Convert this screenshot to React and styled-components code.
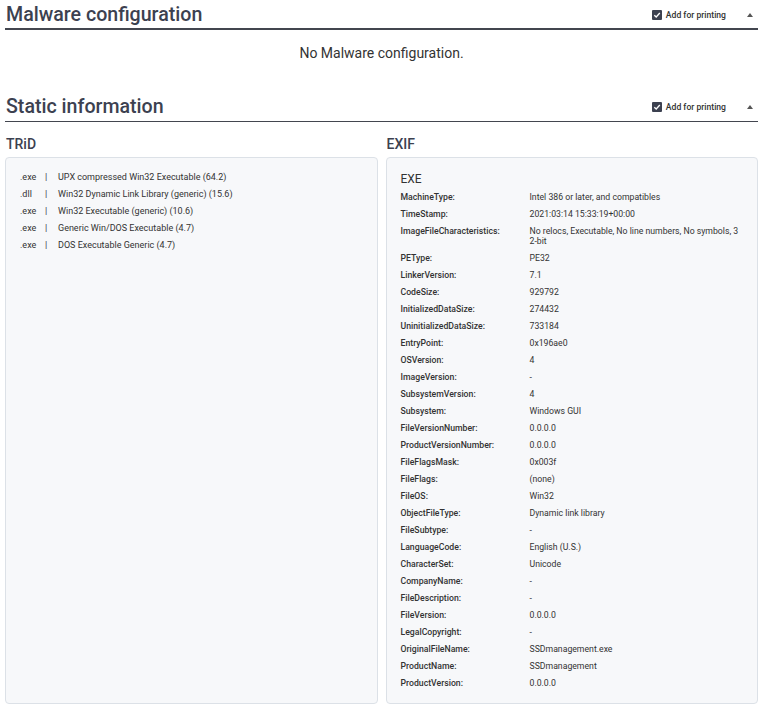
import React from "react";
import styled, { createGlobalStyle } from "styled-components";

const Global = createGlobalStyle`
  html, body { margin: 0; padding: 0; background: #fff; }
  body { font-family: Roboto, "Noto Sans", "Liberation Sans", sans-serif; color: #333; }
`;

const Page = styled.div`
  padding: 0 15px 11px 5px;
`;

const SectionHeader = styled.div`
  display: flex;
  align-items: center;
  justify-content: space-between;
  border-bottom: ${(p) => (p.$thick ? "2px" : "1px")} solid #43464f;
  padding: 3px 0 ${(p) => (p.$thick ? "1px" : "2px")} 1px;
`;

const SectionTitle = styled.h2`
  margin: 0;
  font-size: 19.6px;
  line-height: 24px;
  font-weight: 500;
  color: #3c4150;
`;

const HeaderTools = styled.div`
  display: flex;
  align-items: center;
  gap: 4px;
`;

const PrintLabel = styled.label`
  display: flex;
  align-items: center;
  gap: 4px;
  font-size: 8.6px;
  font-weight: 500;
  color: #333;
`;

const CheckBox = styled.span`
  width: 10px;
  height: 10px;
  border-radius: 1px;
  background: #3c4150;
  display: inline-flex;
  align-items: center;
  justify-content: center;
`;

const Caret = styled.span`
  margin-left: 17px;
  margin-right: 5px;
  width: 0;
  height: 0;
  border-left: 3px solid transparent;
  border-right: 3px solid transparent;
  border-bottom: 4px solid #555;
`;

const EmptyMessage = styled.div`
  text-align: center;
  font-size: 14px;
  line-height: 18px;
  color: #333;
  padding: 14px 0 0;
  height: 48px;
`;

const Columns = styled.div`
  display: grid;
  grid-template-columns: 1fr 1fr;
  gap: 8px;
  margin-top: 12px;
`;

const Column = styled.div`
  display: flex;
  flex-direction: column;
`;

const ColumnTitle = styled.h3`
  margin: 0;
  padding-left: 1px;
  font-size: 14px;
  line-height: 20px;
  font-weight: 500;
  color: #3c4150;
  margin-bottom: 3px;
`;

const Panel = styled.div`
  flex: 1;
  background: #f7f8fa;
  border: 1px solid #dce1e7;
  border-radius: 4px;
  padding: ${(p) => p.$pad};
`;

const TridRow = styled.div`
  display: flex;
  font-size: 9px;
  line-height: 10px;
  padding: 3.5px 0;
  color: #333;
`;

const Ext = styled.span`
  width: 25px;
`;

const Sep = styled.span`
  width: 13px;
`;

const ExifTitle = styled.div`
  font-size: 12px;
  line-height: 16px;
  color: #333;
  margin-bottom: 1px;
`;

const ExifRow = styled.div`
  display: grid;
  grid-template-columns: 129px 1fr;
  font-size: 8.7px;
  line-height: 10px;
  padding: 3.5px 0;
  color: #333;
`;

const ExifKey = styled.span`
  font-weight: 500;
`;

const ExifValue = styled.span`
  word-break: break-all;
`;

const trid = [
  [".exe", "UPX compressed Win32 Executable (64.2)"],
  [".dll", "Win32 Dynamic Link Library (generic) (15.6)"],
  [".exe", "Win32 Executable (generic) (10.6)"],
  [".exe", "Generic Win/DOS Executable (4.7)"],
  [".exe", "DOS Executable Generic (4.7)"],
];

const exif = [
  ["MachineType", "Intel 386 or later, and compatibles"],
  ["TimeStamp", "2021:03:14 15:33:19+00:00"],
  ["ImageFileCharacteristics", "No relocs, Executable, No line numbers, No symbols, 32-bit"],
  ["PEType", "PE32"],
  ["LinkerVersion", "7.1"],
  ["CodeSize", "929792"],
  ["InitializedDataSize", "274432"],
  ["UninitializedDataSize", "733184"],
  ["EntryPoint", "0x196ae0"],
  ["OSVersion", "4"],
  ["ImageVersion", "-"],
  ["SubsystemVersion", "4"],
  ["Subsystem", "Windows GUI"],
  ["FileVersionNumber", "0.0.0.0"],
  ["ProductVersionNumber", "0.0.0.0"],
  ["FileFlagsMask", "0x003f"],
  ["FileFlags", "(none)"],
  ["FileOS", "Win32"],
  ["ObjectFileType", "Dynamic link library"],
  ["FileSubtype", "-"],
  ["LanguageCode", "English (U.S.)"],
  ["CharacterSet", "Unicode"],
  ["CompanyName", "-"],
  ["FileDescription", "-"],
  ["FileVersion", "0.0.0.0"],
  ["LegalCopyright", "-"],
  ["OriginalFileName", "SSDmanagement.exe"],
  ["ProductName", "SSDmanagement"],
  ["ProductVersion", "0.0.0.0"],
];

function Header({ title, thick }) {
  return (
    <SectionHeader $thick={thick}>
      <SectionTitle>{title}</SectionTitle>
      <HeaderTools>
        <PrintLabel>
          <CheckBox>
            <svg width="8" height="8" viewBox="0 0 8 8">
              <path d="M1.3 4.2 L3.2 6 L6.8 2" fill="none" stroke="#fff" strokeWidth="1.3" />
            </svg>
          </CheckBox>
          Add for printing
        </PrintLabel>
        <Caret />
      </HeaderTools>
    </SectionHeader>
  );
}

export default function App() {
  return (
    <Page>
      <Global />
      <Header title="Malware configuration" thick />
      <EmptyMessage>No Malware configuration.</EmptyMessage>
      <Header title="Static information" />
      <Columns>
        <Column>
          <ColumnTitle>TRiD</ColumnTitle>
          <Panel $pad="10px 14px">
            {trid.map(([e, d], i) => (
              <TridRow key={i}>
                <Ext>{e}</Ext>
                <Sep>|</Sep>
                <span>{d}</span>
              </TridRow>
            ))}
          </Panel>
        </Column>
        <Column>
          <ColumnTitle>EXIF</ColumnTitle>
          <Panel $pad="13px 16px 12px 14px">
            <ExifTitle>EXE</ExifTitle>
            {exif.map(([k, v]) => (
              <ExifRow key={k}>
                <ExifKey>{k}:</ExifKey>
                <ExifValue>{v}</ExifValue>
              </ExifRow>
            ))}
          </Panel>
        </Column>
      </Columns>
    </Page>
  );
}
